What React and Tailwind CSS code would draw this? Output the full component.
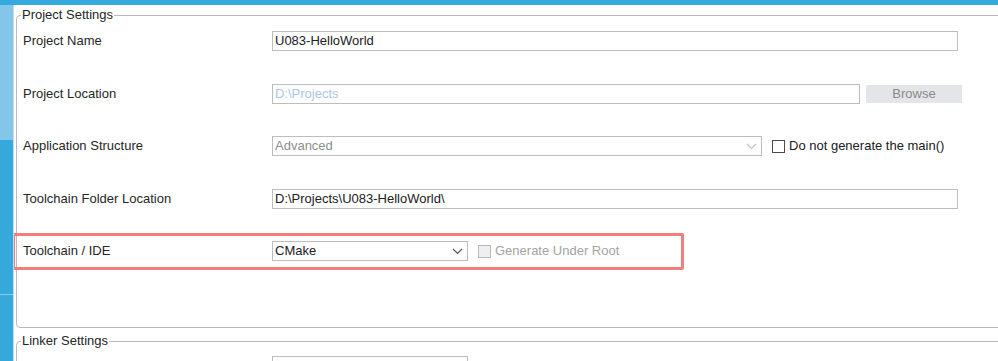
import React from 'react';

const Chevron = ({ color }) => (
  <svg width="11" height="7" viewBox="0 0 11 7" fill="none">
    <path d="M1 1l4.5 4.5L10 1" stroke={color} strokeWidth="1.2" />
  </svg>
);

const Row = ({ label, children }) => (
  <div className="flex items-center h-[20px] pl-[6px]">
    <div className="w-[249px] shrink-0 text-[#262626]">{label}</div>
    {children}
  </div>
);

const TextBox = ({ width, value, disabled }) => (
  <div
    className={`h-[20px] border border-[#bdbdbd] bg-white flex items-center pl-[2px] ${
      disabled ? 'text-[#a9c7e6]' : 'text-[#202020]'
    }`}
    style={{ width }}
  >
    {value}
  </div>
);

const Select = ({ width, value, disabled }) => (
  <div
    className={`h-[20px] border border-[#bdbdbd] bg-white flex items-center justify-between pl-[2px] pr-[4px] ${
      disabled ? 'text-[#8d8d8d]' : 'text-[#202020]'
    }`}
    style={{ width }}
  >
    <span>{value}</span>
    <Chevron color={disabled ? '#c4c4c4' : '#555555'} />
  </div>
);

const Check = ({ label, disabled }) => (
  <div className="flex items-center ml-[10px]">
    <div
      className={`w-[13px] h-[13px] border ${
        disabled ? 'border-[#b8b8b8] bg-[#efefef]' : 'border-[#4a4a4a] bg-white'
      }`}
    />
    <span className={`ml-[4px] ${disabled ? 'text-[#a3a3a3]' : 'text-[#202020]'}`}>{label}</span>
  </div>
);

export default function App() {
  return (
    <div
      className="w-[998px] h-[361px] overflow-hidden flex flex-col bg-white text-[13px] leading-[16px]"
      style={{ fontFamily: '"Liberation Sans", Arial, sans-serif' }}
    >
      {/* top bar */}
      <div className="h-[5px] shrink-0 bg-[#35a8dc]" />

      <div className="flex flex-1 min-h-0">
        {/* left strip */}
        <div className="w-[14px] shrink-0 flex flex-col border-r border-[#cfd8de]">
          <div className="h-[135px] bg-[#84c6ea]" />
          <div className="h-[155px] bg-[#35a8dc] border-b border-[#8ccbea]" />
          <div className="flex-1 bg-[#35a8dc]" />
        </div>

        {/* main */}
        <div className="flex-1 min-w-0 overflow-hidden pl-[2px] pt-[2px]">
          <fieldset className="w-[1000px] h-[321px] border border-[#bcbcbc] rounded-[4px]">
            <legend className="ml-[4px] px-[1px] text-[#262626]">Project Settings</legend>
            <div className="flex flex-col gap-[32.5px] pt-[8px]">
              <Row label="Project Name">
                <TextBox width={686} value="U083-HelloWorld" />
              </Row>
              <Row label="Project Location">
                <TextBox width={588} value="D:\Projects" disabled />
                <div className="ml-[6px] w-[96px] h-[18px] bg-[#e3e5e8] text-[#8a8a8a] flex items-center justify-center">
                  Browse
                </div>
              </Row>
              <Row label="Application Structure">
                <Select width={490} value="Advanced" disabled />
                <Check label="Do not generate the main()" />
              </Row>
              <Row label="Toolchain Folder Location">
                <TextBox width={686} value="D:\Projects\U083-HelloWorld\" />
              </Row>
              <div className="relative">
                <div className="absolute left-[-5px] top-[-8px] w-[672px] h-[37px] border-[3px] border-[#f27d7d] rounded-[2px] pointer-events-none" />
                <Row label="Toolchain / IDE">
                  <Select width={196} value="CMake" />
                  <Check label="Generate Under Root" disabled />
                </Row>
              </div>
            </div>
          </fieldset>

          <fieldset className="mt-[5px] w-[1000px] h-[60px] border border-[#bcbcbc] rounded-[4px]">
            <legend className="ml-[4px] px-[1px] text-[#262626]">Linker Settings</legend>
            <div className="pl-[255px] pt-[7px]">
              <div className="w-[196px] h-[20px] border border-[#bdbdbd] bg-white" />
            </div>
          </fieldset>
        </div>
      </div>
    </div>
  );
}
